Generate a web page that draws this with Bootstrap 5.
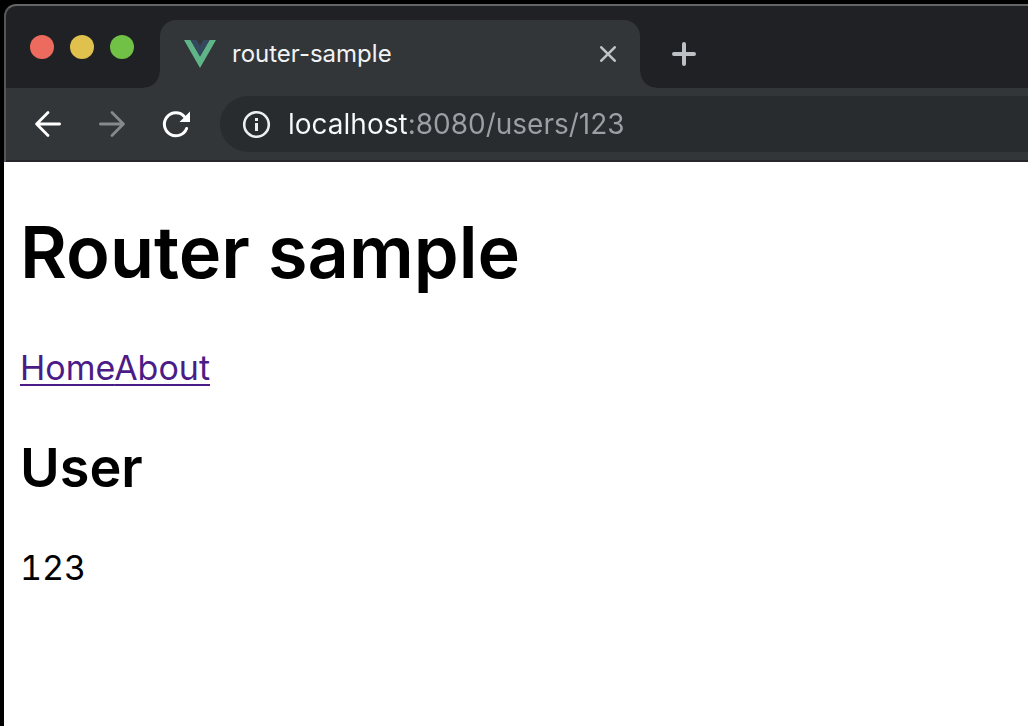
<!DOCTYPE html>
<html lang="en">
<head>
<meta charset="utf-8">
<meta name="viewport" content="width=device-width, initial-scale=1">
<title>router-sample</title>
<link href="https://cdn.jsdelivr.net/npm/bootstrap@5.3.0/dist/css/bootstrap.min.css" rel="stylesheet">
<style>
  body { background: #000; font-family: Inter, "Liberation Sans", sans-serif; color: #000; }
  .browser { padding: 4px 0 0 4px; }
  .chrome { background: #202124; border-top: 2px solid #646566; border-left: 2px solid #54575a; border-top-left-radius: 12px; overflow: hidden; }
  .tabstrip { height: 82px; padding-left: 24px; }
  .lights { gap: 16px; width: 130px; padding-top: 29px; }
  .light { width: 24px; height: 24px; border-radius: 50%; border: 0; padding: 0; }
  .light-red { background: #ed6a5e; }
  .light-yellow { background: #e0c14d; }
  .light-green { background: #71c146; }
  .page-tab { width: 480px; height: 68px; padding: 0 24px; background: #323639; border-radius: 16px 16px 0 0; color: #f1f3f4; font-size: 24px; }
  .page-tab::before, .page-tab::after { content: ""; position: absolute; bottom: 0; width: 16px; height: 16px; }
  .page-tab::before { right: 100%; background: radial-gradient(circle at 0 0, #202124 15px, #323639 16px); }
  .page-tab::after { left: 100%; background: radial-gradient(circle at 100% 0, #202124 15px, #323639 16px); }
  .bare { border: 0; padding: 0; background: none; }
  .new-tab { margin-left: 32px; height: 68px; }
  .toolbar { background: #323639; height: 74px; padding: 8px 0 8px 26px; border-bottom: 2px solid #25272a; }
  .tool-nav { gap: 32px; width: 188px; }
  .omnibox { height: 56px; padding-left: 20px; gap: 16px; background: #282c2f; border-radius: 28px 0 0 28px; }
  .address { font-size: 28px; line-height: 40px; color: #9aa0a6; outline: 0; background: linear-gradient(90deg, #f8f9fa 121px, #9aa0a3 121px); -webkit-background-clip: text; background-clip: text; -webkit-text-fill-color: transparent; }
  .document { background: #fff; min-height: calc(100vh - 162px); padding: 46px 16px 16px; }
  .document h1 { font-size: 72px; line-height: 88px; font-weight: 600; margin: 0 0 48px; }
  .document nav { font-size: 34px; line-height: 48px; margin-bottom: 40px; }
  .document nav a { color: #4b1c88; text-decoration-thickness: 2px; text-underline-offset: 4px; text-decoration-skip-ink: none; }
  .document h2 { font-size: 54px; line-height: 72px; font-weight: 600; margin: 0 0 40px; }
  .document p { font-size: 34px; line-height: 48px; margin: 0; font-variant-numeric: tabular-nums; }
  svg { display: block; flex: none; }
</style>
</head>
<body>
<div class="browser">
  <header class="chrome">
    <div class="tabstrip d-flex align-items-end">
      <div class="lights d-flex align-self-start">
        <button class="light light-red" aria-label="Close window"></button>
        <button class="light light-yellow" aria-label="Minimise window"></button>
        <button class="light light-green" aria-label="Zoom window"></button>
      </div>
      <div class="page-tab position-relative d-flex align-items-center">
        <svg class="me-3" width="32" height="28" viewBox="0 0 32 28" aria-hidden="true">
          <path fill="#5fb587" d="M0 0h6.500L16 16.500 25.500 0H32L16 28z"/>
          <path fill="#35495e" d="M6.500 0h6L16 6l3.500-6h6L16 16.500z"/>
        </svg>
        <span class="flex-grow-1">router-sample</span>
        <button class="bare" aria-label="Close tab">
          <svg width="16" height="16" viewBox="0 0 16 16" fill="none" stroke="#bfc1c3" stroke-width="2.600" stroke-linecap="round"><path d="M1.300 1.300l13.400 13.400M14.700 1.300L1.300 14.700"/></svg>
        </button>
      </div>
      <button class="bare new-tab" aria-label="New tab">
        <svg width="24" height="24" viewBox="0 0 24 24" fill="none" stroke="#bdc1c6" stroke-width="4" stroke-linecap="round"><path d="M12 2v20M2 12h20"/></svg>
      </button>
    </div>
    <div class="toolbar d-flex align-items-center">
      <div class="tool-nav d-flex">
        <button class="bare" aria-label="Back">
          <svg width="32" height="32" viewBox="0 0 32 32" fill="none" stroke="#fff" stroke-width="2.800" stroke-linecap="round" stroke-linejoin="round"><path d="M27.600 16H4.600M16 4.600L4.600 16 16 27.400"/></svg>
        </button>
        <button class="bare" aria-label="Forward">
          <svg width="32" height="32" viewBox="0 0 32 32" fill="none" stroke="#87898b" stroke-width="2.800" stroke-linecap="round" stroke-linejoin="round"><path d="M4.400 16h23M16 4.600L27.400 16 16 27.400"/></svg>
        </button>
        <button class="bare" aria-label="Reload">
          <svg width="32" height="32" viewBox="0 0 32 32" fill="none"><path stroke="#fff" stroke-width="3" stroke-linecap="round" d="M26.600 20.500A11.500 11.500 0 1 1 24.500 8.700"/><path fill="#fff" d="M30 3.500V14H19.500z"/></svg>
        </button>
      </div>
      <div class="omnibox d-flex flex-grow-1 align-items-center">
        <svg width="32" height="32" viewBox="0 0 32 32" fill="none" aria-hidden="true"><circle cx="16.500" cy="16.500" r="12.300" stroke="#eceef0" stroke-width="2.600"/><path fill="#eceef0" d="M15 10h3v3h-3zM15 15h3v8h-3z"/></svg>
        <input class="bare address flex-grow-1" type="text" aria-label="Address" value="localhost:8080/users/123" spellcheck="false">
      </div>
    </div>
  </header>
  <main class="document">
    <h1>Router sample</h1>
    <nav><a href="#home">Home</a><a href="#about">About</a></nav>
    <h2>User</h2>
    <p>123</p>
  </main>
</div>
<script src="https://cdn.jsdelivr.net/npm/bootstrap@5.3.0/dist/js/bootstrap.bundle.min.js"></script>
</body>
</html>
